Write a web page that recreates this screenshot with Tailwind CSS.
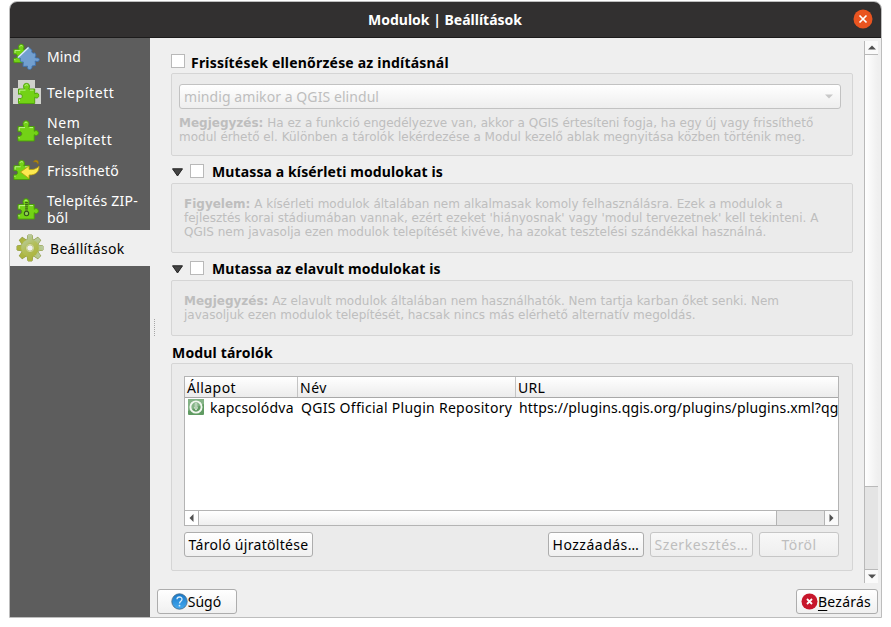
<!DOCTYPE html>
<html lang="hu">
<head>
<meta charset="utf-8">
<title>Modulok | Beállítások</title>
<script src="https://cdn.jsdelivr.net/npm/@tailwindcss/browser@4"></script>
</head>
<body class="bg-white overflow-hidden font-['Noto_Sans',sans-serif] text-[14px] leading-[17px] text-black pl-[9px] pt-px whitespace-nowrap">
<svg class="absolute" width="0" height="0">
  <defs>
    <linearGradient id="gear" gradientUnits="userSpaceOnUse" x1="4" y1="2" x2="20" y2="26"><stop offset="0" stop-color="#b9cfbd"/><stop offset=".5" stop-color="#b3bf5a"/><stop offset="1" stop-color="#a9b035"/></linearGradient>
    <linearGradient id="help" x1="0" y1="0" x2="0" y2="1"><stop offset="0" stop-color="#1878c8"/><stop offset="1" stop-color="#45aaf0"/></linearGradient>
    <symbol id="piece" viewBox="0 0 22 22">
      <path d="M1 6.500H6.800C5.200 3.600 6.200 .8 9 .8s3.900 2.800 2.300 5.700H17.200v4.800c1.500-1.400 4.200-.7 4.200 1.700s-2.700 3.200-4.200 1.700V21H1V16c2.300.6 3.800-.4 3.800-2.300S3 11 1 11.800Z" fill="#73d216" stroke="#4aa005" stroke-width=".9"/>
      <path d="M2.200 10.500V7.600H8M7.400 3.300C7.800 2.200 9.500 1.800 10.400 2.900M12.500 7.600H16M2 17v1.500" fill="none" stroke="#c8f79d" stroke-width=".9"/>
    </symbol>
    <g id="teeth">
      <path id="tooth" d="M11.300 5L12 1H16L16.700 5V23L16 27H12L11.300 23Z"/>
      <use href="#tooth" transform="rotate(45 14 14)"/><use href="#tooth" transform="rotate(90 14 14)"/><use href="#tooth" transform="rotate(135 14 14)"/>
      <circle cx="14" cy="14" r="8.800"/>
    </g>
  </defs>
</svg>
<div class="w-[873px] h-[617px] flex flex-col border border-[#bdbdbd] rounded-t-[8px] overflow-hidden bg-[#efefef]">
  <header class="h-[36px] shrink-0 bg-[#323030] border-b border-[#1c1b1b] flex items-center text-white font-bold relative">
    <div class="w-full text-center pr-px">Modulok | Beállítások</div>
    <svg class="absolute right-[8px] top-[7px]" width="20" height="20" viewBox="0 0 20 20"><circle cx="10" cy="10" r="9.500" fill="#e95420"/><path d="M6.500 6.500l7 7M13.500 6.500l-7 7" stroke="#fff" stroke-width="1.700"/></svg>
  </header>
  <div class="flex flex-1 min-h-0">
    <nav class="w-[140px] shrink-0 bg-[#5d5d5d] text-white flex flex-col">
      <div class="h-[37px] flex items-center">
        <svg class="ml-[3px] mr-[7px] shrink-0" width="27" height="28" viewBox="0 0 27 28"><use href="#piece" x="0" y="0" width="20" height="21"/><path d="M4.500 14.500L15.500 4l3.500 3.300c-1 2 .7 3.600 2.800 2.500l1.200 2.200-1 2.500c1.500 1 4-.3 4.400 2 0 2-2.200 2.500-4.200 1.500l.3 4.500-3.500.5c.6 1.800-.8 3.500-2.500 3.500s-2.500-1.500-2-3.300l-4.500.3.3-4.500c-2.500.8-3.800-1.500-2.800-3.500Z" fill="#729fcf" stroke="#3f73b0" stroke-width=".9"/><path d="M5 14.500L15.500 4.500" stroke="#e5effa" stroke-width="1.300"/></svg>
        <span class="tracking-[0.1px]">Mind</span>
      </div>
      <div class="h-[36px] flex items-center">
        <svg class="ml-[3px] mr-[6px] -mt-[2px] shrink-0" width="28" height="28" viewBox="0 0 28 28"><path d="M0 10h5V2h17v8h6v16H0Z" fill="#d0d2cc"/><use href="#piece" x="4.500" y="4.500" width="22" height="22"/></svg>
        <span class="tracking-[0.6px] -mt-px">Telepített</span>
      </div>
      <div class="h-[40px] flex items-center">
        <svg class="ml-[7px] mr-[8px] shrink-0" width="22" height="22"><use href="#piece" width="22" height="22"/></svg>
        <span class="tracking-[0.55px]">Nem<br>telepített</span>
      </div>
      <div class="h-[38px] flex items-center">
        <svg class="ml-[3px] mr-[6px] shrink-0" width="28" height="24" viewBox="0 0 28 24"><use href="#piece" x="0" y="1" width="21" height="22"/><path d="M20.500 4c.5-2 3.500-2.200 4.500-.8.600 1 .2 2 0 3-.3-1.800-2-3-4.500-2.200Z" fill="#b98d0a" stroke="#9a7408" stroke-width=".6"/><path d="M7.500 14l8.500-6v3.500c4 .5 7.500-.5 10-3.300 0 5.800-3 8.800-10 8.800v3.500Z" fill="#fce94f" stroke="#b79a10" stroke-width=".8"/></svg>
        <span class="tracking-[0.3px]">Frissíthető</span>
      </div>
      <div class="h-[41px] flex items-center">
        <svg class="ml-[7px] mr-[8px] -mt-px shrink-0" width="22" height="22" viewBox="0 0 22 22"><use href="#piece" width="22" height="22"/><path d="M9.500 4v10" stroke="#3e5a1e" stroke-width="2.800" stroke-dasharray="1.200 .9"/><circle cx="9.500" cy="15.500" r="2.200" fill="#8fce55" stroke="#33511a" stroke-width="1.100"/></svg>
        <span class="tracking-[0.25px] -mt-px">Telepítés ZIP-<br>ből</span>
      </div>
      <div class="h-[36px] flex items-center bg-[#efefef] text-black">
        <svg class="ml-[6px] mr-[8px] shrink-0" width="28" height="28" viewBox="0 0 28 28"><use href="#teeth" fill="#8f9a45" stroke="#8f9a45" stroke-width="1"/><use href="#teeth" fill="url(#gear)"/><circle cx="14" cy="14" r="3.600" fill="#efefef" stroke="#a3ae52" stroke-width="1.600"/><circle cx="14" cy="14" r="3.700" fill="none" stroke="#dbe2a8" stroke-width=".8"/></svg>
        <span class="tracking-[0.3px] -ml-[2px]">Beállítások</span>
      </div>
    </nav>
    <div class="w-[7px] shrink-0 flex items-center justify-center pl-px"><div class="h-[17px] border-l border-dotted border-[#a5a5a5]"></div></div>
    <div class="flex-1 flex flex-col min-w-0">
      <div class="flex h-[545px]">
        <main class="w-[696px] pl-[14px]">
          <div class="h-[35px] pt-[16px] flex">
            <span class="size-[14px] bg-white border border-[#b9b9b9]"></span><b class="ml-[6px] tracking-[0.2px]">Frissítések ellenőrzése az indításnál</b>
          </div>
          <section class="h-[83px] border border-[#d5d5d5] rounded-[2px] bg-[#ebebeb] pt-[10px] pl-[7px] text-[#bebebe]">
            <div class="w-[662px] h-[25px] rounded-[3px] border border-[#c2c2c2] bg-linear-to-b from-white to-[#eeeeee] flex items-center justify-between pl-[4px] pr-[7px]">
              <span class="tracking-[0.07px]">mindig amikor a QGIS elindul</span>
              <svg width="8" height="5"><path d="M0 0.500h8L4 4.500Z" fill="#c8c8c8"/></svg>
            </div>
            <p class="mt-[7px] font-['DejaVu_Sans',sans-serif] text-[12px] leading-[14px]"><b>Megjegyzés:</b> Ha ez a funkció engedélyezve van, akkor a QGIS értesíteni fogja, ha egy új vagy frissíthető<br>modul érhető el. Különben a tárolók lekérdezése a Modul kezelő ablak megnyitása közben történik meg.</p>
          </section>
          <div class="h-[27px] pt-[8px] pl-px flex">
            <svg class="mt-[4px]" width="11" height="9"><path d="M.5 .8h10L5.500 8Z" fill="#444" stroke="#222"/></svg>
            <span class="ml-[7px] size-[14px] bg-white border border-[#b9b9b9]"></span><b class="ml-[8px] tracking-[0.12px] -mt-px">Mutassa a kísérleti modulokat is</b>
          </div>
          <section class="h-[70px] border border-[#d5d5d5] rounded-[2px] bg-[#ebebeb] pt-[13px] pl-[12px] text-[#bebebe]">
            <p class="font-['DejaVu_Sans',sans-serif] text-[12px] leading-[14px]"><b>Figyelem:</b> A kísérleti modulok általában nem alkalmasak komoly felhasználásra. Ezek a modulok a<br>fejlesztés korai stádiumában vannak, ezért ezeket 'hiányosnak' vagy 'modul tervezetnek' kell tekinteni. A<br>QGIS nem javasolja ezen modulok telepítését kivéve, ha azokat tesztelési szándékkal használná.</p>
          </section>
          <div class="h-[27px] pt-[8px] pl-px flex">
            <svg class="mt-[4px]" width="11" height="9"><path d="M.5 .8h10L5.500 8Z" fill="#444" stroke="#222"/></svg>
            <span class="ml-[7px] size-[14px] bg-white border border-[#b9b9b9]"></span><b class="ml-[8px] tracking-[0.12px] -mt-px">Mutassa az elavult modulokat is</b>
          </div>
          <section class="h-[56px] border border-[#d5d5d5] rounded-[2px] bg-[#ebebeb] pt-[13px] pl-[12px] text-[#bebebe]">
            <p class="font-['DejaVu_Sans',sans-serif] text-[12px] leading-[14px]"><b>Megjegyzés:</b> Az elavult modulok általában nem használhatók. Nem tartja karban őket senki. Nem<br>javasoljuk ezen modulok telepítését, hacsak nincs más elérhető alternatív megoldás.</p>
          </section>
          <div class="h-[27px] pt-[8px] pl-px"><b class="block tracking-[0.18px]">Modul tárolók</b></div>
          <section class="h-[208px] border border-[#d5d5d5] rounded-[2px] bg-[#ebebeb] pt-[12px] pl-[12px]">
            <div class="w-[655px] h-[150px] border border-[#b4b4b4] bg-white flex flex-col overflow-hidden">
              <div class="h-[21px] shrink-0 border-b border-[#a8a8a8] bg-linear-to-b from-white to-[#ececec] grid grid-cols-[113px_218px_1fr] pt-px">
                <span class="pl-[2px] pt-[2px] -mt-px border-r border-[#c4c4c4] tracking-[0.4px]">Állapot</span>
                <span class="pl-[2px] pt-[2px] -mt-px border-r border-[#c4c4c4] tracking-[0.5px]">Név</span>
                <span class="pl-[2px] pt-[2px] -mt-px tracking-[0.3px]">URL</span>
              </div>
              <div class="flex-1 grid grid-cols-[113px_218px_323px] content-start pt-px">
                <span class="flex pl-[3px]"><svg class="mr-[6px] shrink-0" width="16" height="16" viewBox="0 0 16 16"><rect width="16" height="16" rx="1" fill="#609b62"/><path d="M0 0h16v5L0 12Z" fill="#84b386"/><circle cx="8" cy="8" r="5.600" fill="none" stroke="#f1f7ef" stroke-width="1.900"/><path d="M6.800 4.500h2.400V8.500h1L8 11.500 5.800 8.500h1Z" fill="#f1f7ef"/><path d="M8 5v5" stroke="#609b62" stroke-width=".8"/></svg><span class="tracking-[0.2px]">kapcsolódva</span></span>
                <span class="pl-[3px] tracking-[0.28px]">QGIS Official Plugin Repository</span>
                <span class="pl-[3px] tracking-[0.14px]">https://plugins.qgis.org/plugins/plugins.xml?qg</span>
              </div>
              <div class="h-[15px] shrink-0 border-t border-[#b4b4b4] flex">
                <div class="w-[14px] border-r border-[#b4b4b4] flex items-center justify-center"><svg width="5" height="8"><path d="M4.500 0v8L.5 4Z" fill="#505050"/></svg></div>
                <div class="w-[577px] bg-linear-to-b from-white to-[#efefef]"></div>
                <div class="w-[49px] bg-[#e4e4e4] border-x border-[#b4b4b4]"></div>
                <div class="flex-1 flex items-center justify-center bg-[#fafafa]"><svg width="5" height="8"><path d="M.5 0v8L4.500 4Z" fill="#505050"/></svg></div>
              </div>
            </div>
            <div class="mt-[6px] w-[655px] h-[25px] flex">
              <div class="w-[129px] mr-auto rounded-[3px] border border-[#adadad] bg-linear-to-b from-white to-[#f0f0f0] flex items-center justify-center tracking-[0.3px]">Tároló újratöltése</div>
              <div class="w-[96px] mr-[6px] rounded-[3px] border border-[#adadad] bg-linear-to-b from-white to-[#f0f0f0] flex items-center justify-center tracking-[0.5px]">Hozzáadás…</div>
              <div class="w-[103px] mr-[6px] rounded-[3px] border border-[#c6c6c6] bg-linear-to-b from-[#f8f8f8] to-[#eeeeee] flex items-center justify-center tracking-[0.55px] text-[#bebebe]">Szerkesztés…</div>
              <div class="w-[80px] rounded-[3px] border border-[#c6c6c6] bg-linear-to-b from-[#f8f8f8] to-[#eeeeee] flex items-center justify-center tracking-[0.4px] text-[#bebebe]">Töröl</div>
            </div>
          </section>
        </main>
        <div class="ml-[11px] mt-[3px] w-[14px] h-[542px] border-l border-[#b9b9b9] flex flex-col">
          <div class="h-[14px] border-b border-[#b9b9b9] bg-[#fafafa] flex items-center justify-center"><svg width="8" height="5"><path d="M0 4.500h8L4 .5Z" fill="#505050"/></svg></div>
          <div class="h-[431px] bg-linear-to-r from-white to-[#efefef]"></div>
          <div class="h-[84px] bg-[#e4e4e4] border-y border-[#b9b9b9]"></div>
          <div class="flex-1 bg-[#fafafa] flex items-center justify-center"><svg width="8" height="5"><path d="M0 .5h8L4 4.500Z" fill="#505050"/></svg></div>
        </div>
      </div>
      <footer class="flex justify-between pt-[6px] pr-[3px] h-[33px]">
        <div class="w-[80px] h-[25px] rounded-[3px] border border-[#adadad] bg-linear-to-b from-white to-[#f0f0f0] flex items-center justify-center pr-[2px]">
          <svg width="17" height="17" viewBox="0 0 17 17"><circle cx="8.500" cy="8.500" r="7.700" fill="url(#help)" stroke="#49708f" stroke-width=".9"/><path d="M6 6.300C6 3.300 11 3.200 11 6.200c0 2-2.500 2-2.500 4.300" fill="none" stroke="#d8edfc" stroke-width="1.300"/><circle cx="8.500" cy="12.700" r=".9" fill="#d8edfc"/></svg><span>Súgó</span>
        </div>
        <div class="w-[82px] h-[25px] rounded-[3px] border border-[#adadad] bg-linear-to-b from-white to-[#f0f0f0] flex items-center justify-center pr-[2px]">
          <svg width="17" height="17" viewBox="0 0 17 17"><circle cx="8.500" cy="8.500" r="8" fill="#c7162b"/><path d="M6 6l5 5M11 6l-5 5" stroke="#fff" stroke-width="1.800"/></svg><span class="tracking-[0.25px]"><span class="underline underline-offset-[3px] decoration-1">B</span>ezárás</span>
        </div>
      </footer>
    </div>
  </div>
</div>
</body>
</html>
